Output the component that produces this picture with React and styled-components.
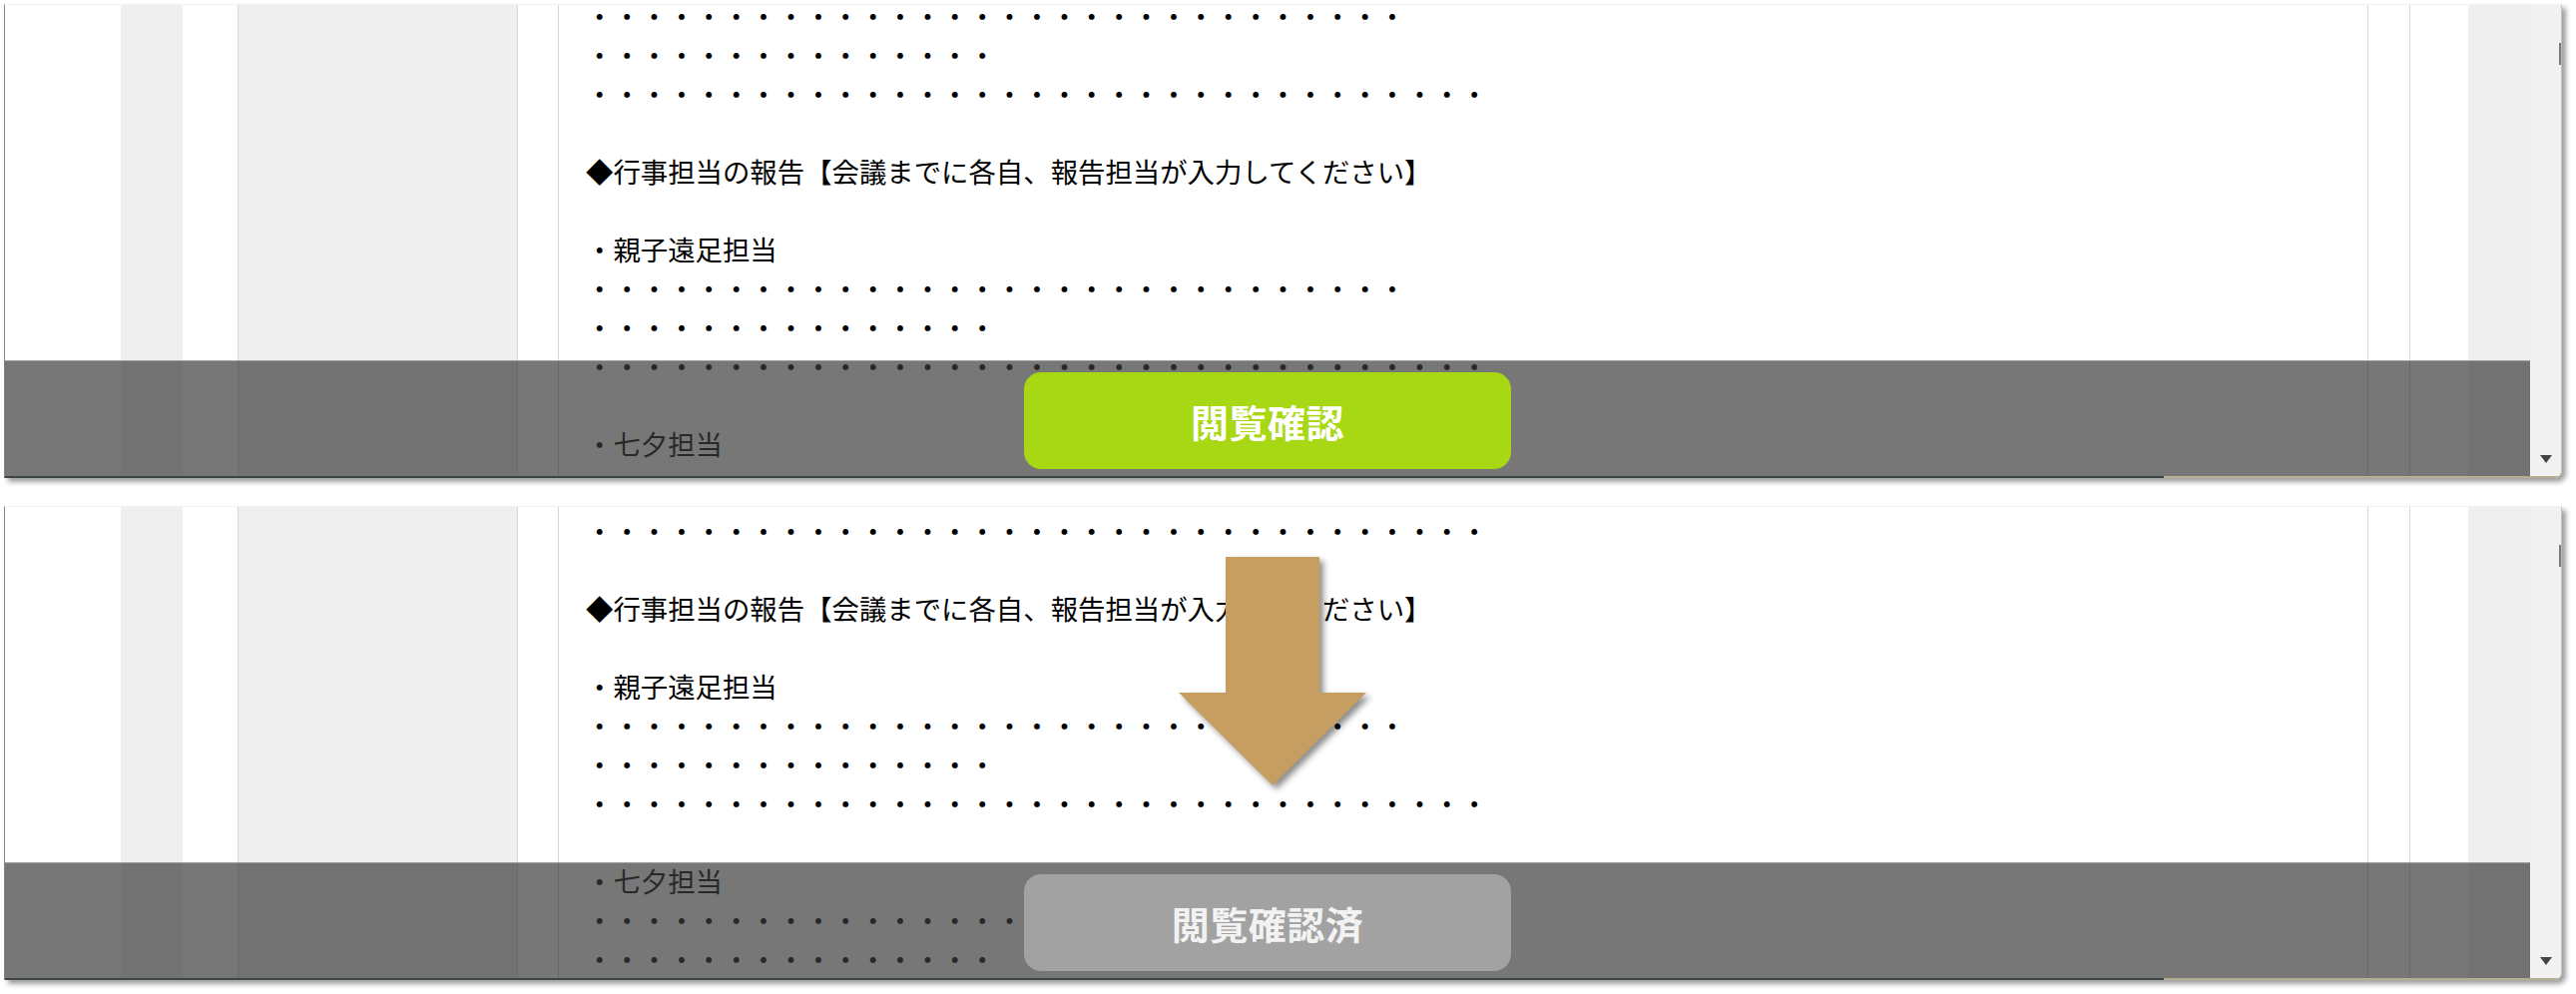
import React from 'react';
import styled, { createGlobalStyle } from 'styled-components';

const GlobalStyle = createGlobalStyle`
  html, body {
    margin: 0;
    padding: 0;
    background: #ffffff;
  }
  body {
    font-family: "Noto Sans CJK JP", "Noto Sans", sans-serif;
  }
`;

const Page = styled.div`
  position: relative;
  width: 2581px;
  height: 996px;
  padding: 4px 0 0 4px;
  box-sizing: border-box;
  display: flex;
  flex-direction: column;
  gap: 28px;
  overflow: hidden;
`;

const Window = styled.div`
  position: relative;
  width: 2563px;
  height: 475px;
  display: flex;
  border-left: 1px solid #8e8474;
  border-top: 1px solid #f2f2f2;
  box-sizing: border-box;
  box-shadow: 4px 4px 5px rgba(0, 0, 0, 0.38);
  border-bottom-right-radius: 8px;
  overflow: hidden;
  background: #ffffff;
`;

const Column = styled.div`
  flex: 0 0 ${p => p.$w}px;
  background: ${p => p.$bg || '#ffffff'};
  border-left: ${p => (p.$line ? '1px solid #d6d6d6' : 'none')};
`;

const ContentColumn = styled.div`
  flex: 1;
  min-width: 0;
  border-left: 1px solid #d6d6d6;
  padding-left: 27px;
  overflow: hidden;
`;

const Text = styled.div`
  margin-top: ${p => p.$offset}px;
  font-size: 27.4px;
  line-height: 39px;
  color: #000000;
  white-space: pre;
`;

const Line = styled.div`
  height: 39px;
`;

const ScrollBar = styled.div`
  position: relative;
  flex: 0 0 32px;
  background: #f1f1f1;
  border-right: 1px solid #c9c2a6;
  box-sizing: border-box;
  border-bottom-right-radius: 8px;
`;

const ScrollArrow = styled.div`
  position: absolute;
  bottom: 15px;
  left: 10px;
  width: 0;
  height: 0;
  border-left: 6px solid transparent;
  border-right: 6px solid transparent;
  border-top: 8px solid #444444;
`;

const ScrollThumbEdge = styled.div`
  position: absolute;
  top: 38px;
  right: 0;
  width: 2px;
  height: 22px;
  background: #7a7a7a;
`;

const Overlay = styled.div`
  position: absolute;
  left: 0;
  right: 32px;
  bottom: 0;
  height: 118px;
  box-sizing: border-box;
  border-top: 1px solid rgba(160, 160, 160, 0.9);
  background: rgba(58, 58, 58, 0.69);
  display: flex;
  justify-content: center;
  align-items: center;
  padding-top: 2px;
`;

const BottomEdge = styled.div`
  position: absolute;
  left: 0;
  right: 0;
  bottom: 0;
  height: 2px;
  background: linear-gradient(to right, #3c4646 0, #3c4646 2163px, #b5ae92 2163px);
`;

const ConfirmButton = styled.div`
  width: 488px;
  height: 97px;
  border-radius: 17px;
  background: ${p => (p.$done ? '#a2a2a2' : '#a8d713')};
  color: ${p => (p.$done ? '#f2f2f2' : '#ffffff')};
  font-family: "Noto Sans CJK JP", sans-serif;
  font-weight: 700;
  font-size: 38px;
  display: flex;
  align-items: center;
  justify-content: center;
  letter-spacing: 0.5px;
`;

const Arrow = styled.svg`
  position: absolute;
  left: 1181px;
  top: 558px;
  overflow: visible;
  filter: drop-shadow(4px 4px 3px rgba(0, 0, 0, 0.45));
`;

const lines = [
  { dots: 30 },
  { dots: 15 },
  { dots: 33 },
  { text: '' },
  { text: '◆行事担当の報告【会議までに各自、報告担当が入力してください】' },
  { text: '' },
  { text: '・親子遠足担当' },
  { dots: 30 },
  { dots: 15 },
  { dots: 33 },
  { text: '' },
  { text: '・七夕担当' },
  { dots: 30 },
  { dots: 15 },
  { dots: 33 },
  { text: '' },
];

function MinutesWindow({ offset, label, done }) {
  return (
    <Window>
      <Column $w={116} />
      <Column $w={62} $bg="#efefef" />
      <Column $w={55} />
      <Column $w={279} $bg="#efefef" $line />
      <Column $w={40} $line />
      <ContentColumn>
        <Text $offset={offset}>
          {lines.map((l, i) => (
            <Line key={i}>{l.dots ? '・'.repeat(l.dots) : l.text}</Line>
          ))}
        </Text>
      </ContentColumn>
      <Column $w={41} $line />
      <Column $w={58} $line />
      <Column $w={62} $bg="#efefef" />
      <ScrollBar>
        <ScrollThumbEdge />
        <ScrollArrow />
      </ScrollBar>
      <Overlay>
        <ConfirmButton $done={done}>{label}</ConfirmButton>
      </Overlay>
      <BottomEdge />
    </Window>
  );
}

export default function App() {
  return (
    <>
      <GlobalStyle />
      <Page>
        <MinutesWindow offset={-9} label="閲覧確認" />
        <MinutesWindow offset={-74} label="閲覧確認済" done />
        <Arrow width="188" height="229" viewBox="0 0 188 229">
          <polygon points="47,0 141,0 141,136 188,136 94,229 0,136 47,136" fill="#c69e62" />
        </Arrow>
      </Page>
    </>
  );
}
